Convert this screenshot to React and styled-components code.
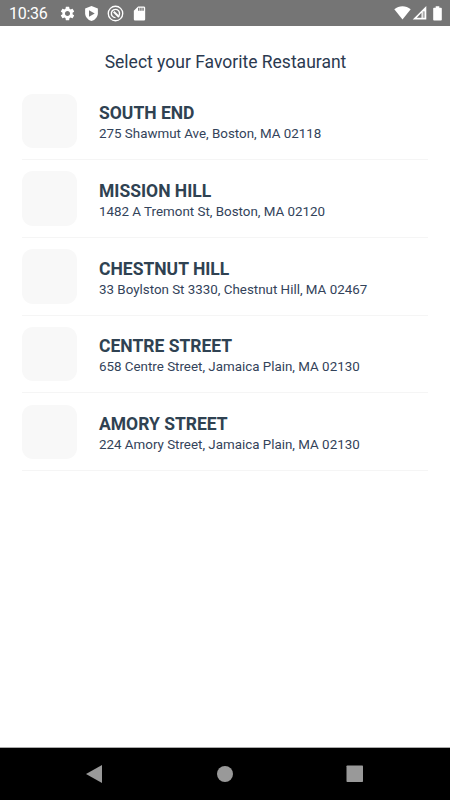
import React from 'react'
import styled, { createGlobalStyle } from 'styled-components'

const restaurants = [
    { name: 'SOUTH END', address: '275 Shawmut Ave, Boston, MA 02118' },
    { name: 'MISSION HILL', address: '1482 A Tremont St, Boston, MA 02120' },
    { name: 'CHESTNUT HILL', address: '33 Boylston St 3330, Chestnut Hill, MA 02467' },
    { name: 'CENTRE STREET', address: '658 Centre Street, Jamaica Plain, MA 02130' },
    { name: 'AMORY STREET', address: '224 Amory Street, Jamaica Plain, MA 02130' },
]

function StatusBar() {
    return (
        <Status>
            <Time>10:36</Time>
            <StatusIcons>
                <svg width="17" height="17" viewBox="0 0 24 24" fill="#fff">
                    <path d="M19.14 12.94c.04-.3.06-.61.06-.94 0-.32-.02-.64-.07-.94l2.03-1.58a.49.49 0 0 0 .12-.61l-1.92-3.32a.488.488 0 0 0-.59-.22l-2.39.96c-.5-.38-1.03-.7-1.62-.94l-.36-2.54a.484.484 0 0 0-.48-.41h-3.84c-.24 0-.43.17-.47.41l-.36 2.54c-.59.24-1.13.57-1.62.94l-2.39-.96c-.22-.08-.47 0-.59.22L2.74 8.87c-.12.21-.08.47.12.61l2.03 1.58c-.05.3-.09.63-.09.94s.02.64.07.94l-2.03 1.58a.49.49 0 0 0-.12.61l1.92 3.32c.12.22.37.29.59.22l2.39-.96c.5.38 1.03.7 1.62.94l.36 2.54c.05.24.24.41.48.41h3.84c.24 0 .44-.17.47-.41l.36-2.54c.59-.24 1.13-.56 1.62-.94l2.39.96c.22.08.47 0 .59-.22l1.92-3.32c.12-.22.07-.47-.12-.61l-2.01-1.58zM12 15.6c-1.98 0-3.6-1.62-3.6-3.6s1.62-3.6 3.6-3.6 3.6 1.62 3.6 3.6-1.62 3.6-3.6 3.6z" />
                </svg>
                <svg width="17" height="17" viewBox="0 0 24 24">
                    <path fill="#fff" d="M12 1.5 3 5v6.5c0 5 3.8 9.5 9 11 5.2-1.5 9-6 9-11V5z" />
                    <path fill="#757575" d="M8.5 7.5v9l8-4.5z" />
                </svg>
                <svg width="17" height="17" viewBox="0 0 24 24" fill="none" stroke="#fff">
                    <circle cx="12" cy="12" r="10.2" strokeWidth="1.9" />
                    <path strokeWidth="2" d="M16.8 15.2A5.8 5.8 0 1 0 12 17.8" />
                    <path strokeWidth="2.8" d="m9.5 9.5 7.5 7.5" />
                </svg>
                <svg width="17" height="17" viewBox="0 0 24 24" fill="#fff">
                    <path d="M18 2h-8L4 8v12c0 1.1.9 2 2 2h12c1.1 0 2-.9 2-2V4c0-1.1-.9-2-2-2zm-6 6h-2V4h2v4zm3 0h-2V4h2v4zm3 0h-2V4h2v4z" />
                </svg>
            </StatusIcons>
            <Signals>
                <svg width="17" height="14" viewBox="0 0 17 14" fill="#fff">
                    <path d="M.3 3.2C5-.7 12-.7 16.7 3.2L8.500 13.500z" />
                </svg>
                <svg width="15" height="14" viewBox="0 0 15 14">
                    <path fill="#fff" fillRule="evenodd" d="M14.3 0v13.6H.7zM9.5 6.8 4.8 11.8h4.7z" />
                    <path fill="#757575" d="M10.7 5.3h2v6.5h-2z" opacity=".6" />
                </svg>
                <svg width="9" height="15" viewBox="0 0 9 15" fill="#fff">
                    <path d="M2.7.3h3.6v1.5H8c.5 0 .8.3.8.8v11.1c0 .5-.3.8-.8.8H1c-.5 0-.8-.3-.8-.8V2.6c0-.5.3-.8.8-.8h1.7z" />
                </svg>
            </Signals>
        </Status>
    )
}

function NavigationBar() {
    return (
        <NavBar>
            <svg width="18" height="20" viewBox="0 0 18 20" fill="#999">
                <path d="M17 1v18L1 10z" />
            </svg>
            <svg width="18" height="18" viewBox="0 0 18 18" fill="#999">
                <circle cx="9" cy="9" r="8" />
            </svg>
            <svg width="18" height="18" viewBox="0 0 18 18" fill="#999">
                <rect x="0.5" y="0.5" width="16.5" height="16.5" rx="0.7" />
            </svg>
        </NavBar>
    )
}

function App() {
    return (
        <Screen>
            <GlobalStyle />
            <StatusBar />
            <Content>
                <Title>Select your Favorite Restaurant</Title>
                <List>
                    {restaurants.map((item) => (
                        <Row key={item.name}>
                            <Thumbnail />
                            <Info>
                                <Name>{item.name}</Name>
                                <Address>{item.address}</Address>
                            </Info>
                        </Row>
                    ))}
                </List>
            </Content>
            <NavigationBar />
        </Screen>
    )
}

const GlobalStyle = createGlobalStyle`
    * {
        box-sizing: border-box;
    }
    body {
        margin: 0;
        background: #fff;
        font-family: Roboto, sans-serif;
    }
    svg {
        display: block;
        flex-shrink: 0;
    }
`
const Screen = styled.div`
    display: flex;
    flex-direction: column;
    height: 800px;
    overflow: hidden;
`
const Status = styled.header`
    display: flex;
    align-items: center;
    height: 26px;
    padding: 0 8px 0 9px;
    background: #757575;
    color: #fff;
`
const Time = styled.span`
    width: 49.5px;
    font-size: 16px;
    letter-spacing: -0.3px;
    line-height: 26px;
    padding-top: 2px;
`
const StatusIcons = styled.div`
    display: flex;
    gap: 7.2px;
`
const Signals = styled.div`
    display: flex;
    align-items: center;
    margin-left: auto;
    gap: 1px;

    svg:last-child {
        margin-left: 5px;
    }
`
const Content = styled.main`
    flex: 1;
    padding: 24px 22px 0;
`
const Title = styled.h1`
    margin: 0;
    height: 32.7px;
    padding-left: 1px;
    font-size: 17.5px;
    font-weight: 400;
    line-height: 24px;
    text-align: center;
    color: #2b3a50;
`
const List = styled.ul`
    margin: 0;
    padding: 0;
    list-style: none;
`
const Row = styled.li`
    display: flex;
    align-items: center;
    height: 77.7px;
    border-bottom: 1px solid #f5f5f5;
`
const Thumbnail = styled.div`
    width: 54.5px;
    height: 54.5px;
    border-radius: 11px;
    background: #f8f8f8;
`
const Info = styled.div`
    margin-left: 22.5px;
    padding-top: 5.5px;
`
const Name = styled.h2`
    margin: 0;
    font-size: 17.5px;
    font-weight: 700;
    line-height: 21px;
    color: #2f4252;
`
const Address = styled.p`
    margin: 0;
    font-size: 13.36px;
    font-weight: 400;
    line-height: 20px;
    color: #33435a;
`
const NavBar = styled.footer`
    display: flex;
    align-items: center;
    justify-content: space-between;
    height: 53px;
    padding: 0 86px 0 85px;
    border-top: 1px solid #aaa;
    background: #000;
`

export default App
